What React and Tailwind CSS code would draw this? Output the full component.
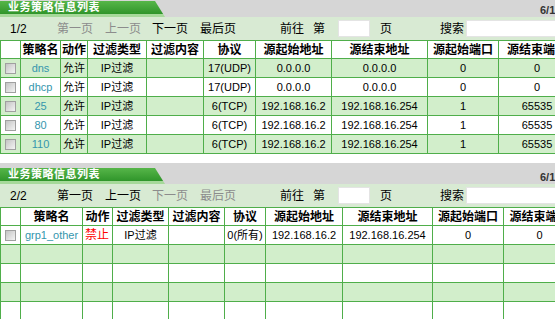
const FONT = { fontFamily: '"Liberation Sans", "Noto Sans CJK SC", sans-serif' };

const topCols = [20, 40, 27, 59, 57, 52, 76, 96, 71, 77];
const bottomCols = [20, 62, 30, 56, 56, 41, 77, 90, 71, 72];

const headers = ['', '策略名', '动作', '过滤类型', '过滤内容', '协议', '源起始地址', '源结束地址', '源起始端口', '源结束端口'];

const topRows = [
  ['dns', '允许', 'IP过滤', '', '17(UDP)', '0.0.0.0', '0.0.0.0', '0', '0'],
  ['dhcp', '允许', 'IP过滤', '', '17(UDP)', '0.0.0.0', '0.0.0.0', '0', '0'],
  ['25', '允许', 'IP过滤', '', '6(TCP)', '192.168.16.2', '192.168.16.254', '1', '65535'],
  ['80', '允许', 'IP过滤', '', '6(TCP)', '192.168.16.2', '192.168.16.254', '1', '65535'],
  ['110', '允许', 'IP过滤', '', '6(TCP)', '192.168.16.2', '192.168.16.254', '1', '65535'],
];

const bottomRows = [
  ['grp1_other', '禁止', 'IP过滤', '', '0(所有)', '192.168.16.2', '192.168.16.254', '0', '0'],
  null,
  null,
  null,
  null,
];

const Checkbox = () => (
  <div className="mx-auto w-[11px] h-[11px] border border-[#a0a0a0] bg-gradient-to-br from-[#c4c4c4] to-[#f4f4f4]" />
);

const PagerLink = ({ label, disabled, w }) => (
  <span className={`${w} ${disabled ? 'text-[#8c8c8c]' : 'text-black'}`}>{label}</span>
);

const Panel = ({ page, first, cols, rows, greenFirst, className }) => (
  <div className={`w-[600px] ${className}`}>
    {/* 标题栏 */}
    <div className="flex h-[21px] bg-[#d6d6d6]">
      <div className="w-[165px] mt-[5px] h-[16px] [clip-path:polygon(0_0,155px_0,165px_100%,0_100%)] flex flex-col">
        <div className="h-[13px] bg-gradient-to-b from-[#56b649] to-[#2f952a] text-white font-bold text-[11px] leading-[13px] pl-[8px] tracking-[0.5px]">
          业务策略信息列表
        </div>
        <div className="h-[3px] bg-[#a6d99a]" />
      </div>
      <div className="w-[375px]" />
      <div className="text-[11px] font-bold text-[#333] self-end leading-[14px]">6/11</div>
    </div>

    {/* 翻页 */}
    <div className="flex items-center h-[23px] bg-[#d8eAd3] text-[12px] pl-[10px]">
      <span className="w-[47px]">{page}</span>
      <PagerLink label="第一页" disabled={first} w="w-[48px]" />
      <PagerLink label="上一页" disabled={first} w="w-[47px]" />
      <PagerLink label="下一页" disabled={!first} w="w-[48px]" />
      <PagerLink label="最后页" disabled={!first} w="w-[80px]" />
      <span className="w-[33px]">前往</span>
      <span className="w-[25px]">第</span>
      <div className="w-[32px] h-[17px] bg-white border border-[#e4e4e4]" />
      <span className="w-[10px]" />
      <span className="w-[60px]">页</span>
      <span className="w-[26px]">搜索</span>
      <div className="w-[130px] h-[17px] bg-white border border-[#e4e4e4]" />
    </div>

    {/* 表格 */}
    <table className="table-fixed border-collapse text-[12px]">
      <colgroup>
        {cols.map((w, i) => (
          <col key={i} style={{ width: w }} />
        ))}
      </colgroup>
      <thead>
        <tr className="h-[18px] bg-white">
          {headers.map((h, i) => (
            <th key={i} className="border border-[#4fae4a] p-0 font-bold text-center whitespace-nowrap overflow-hidden leading-[16px]">
              {h}
            </th>
          ))}
        </tr>
      </thead>
      <tbody>
        {rows.map((row, r) => {
          const green = greenFirst ? r % 2 === 0 : r % 2 === 1;
          return (
            <tr key={r} className={`h-[19px] ${green ? 'bg-[#d2eecb]' : 'bg-white'}`}>
              <td className="border border-[#4fae4a] p-0">{row && <Checkbox />}</td>
              {(row || Array(9).fill('')).map((v, c) => (
                <td
                  key={c}
                  className={`border border-[#4fae4a] p-0 text-[11px] whitespace-nowrap overflow-hidden leading-[17px] ${
                    c === 1 ? 'text-left pl-[2px]' : 'text-center'
                  } ${c === 0 ? 'text-[#3596ad]' : ''} ${v === '禁止' ? 'text-[#ff0000] text-[12px]' : ''}`}
                >
                  {v}
                </td>
              ))}
            </tr>
          );
        })}
      </tbody>
    </table>
  </div>
);

const App = () => {
  return (
    <div className="w-[555px] h-[319px] overflow-hidden bg-white" style={FONT}>
      <Panel page="1/2" first cols={topCols} rows={topRows} greenFirst className="-mt-[4px]" />
      <Panel page="2/2" first={false} cols={bottomCols} rows={bottomRows} greenFirst={false} className="mt-[9px]" />
    </div>
  );
};

export default App;
